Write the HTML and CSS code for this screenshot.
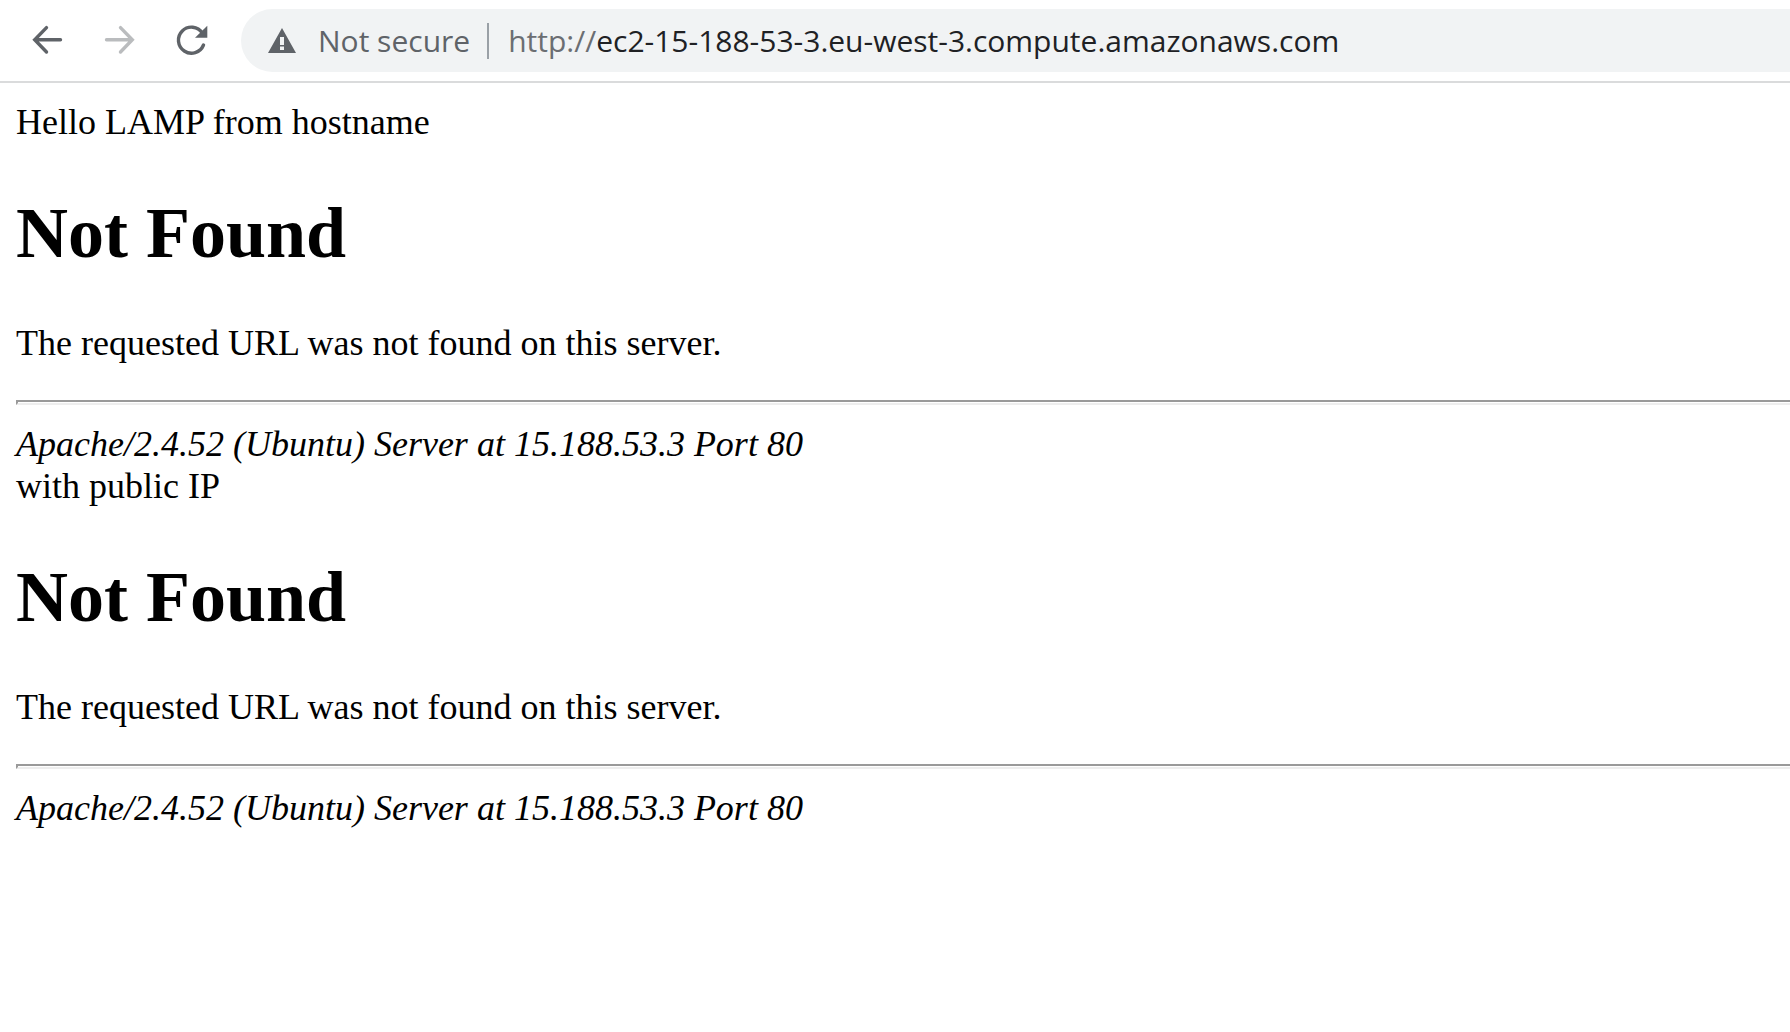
FILE: index.html
```html
<!DOCTYPE html>
<html lang="en">
<head>
<meta charset="utf-8">
<title>Not Found</title>
<link rel="stylesheet" href="styles.css">
</head>
<body>
<header class="toolbar">
  <nav class="nav">
    <button class="nav-button" type="button" aria-label="Back"><svg class="icon" viewBox="0 0 31 31"><path d="M28.500 14.800H3M14.500 2.600L2.700 14.800l11.800 12.200"/></svg></button>
    <button class="nav-button nav-button-disabled" type="button" aria-label="Forward" disabled><svg class="icon" viewBox="0 0 31 31"><path d="M2.500 14.800H28M16.500 2.600l11.800 12.200-11.800 12.200"/></svg></button>
    <button class="nav-button" type="button" aria-label="Reload"><svg class="icon" viewBox="0 0 31 31"><path d="M27.500 20A13 13 0 1 1 26.300 8"/><path class="icon-solid" d="M31.300 .8v11.900H19z"/></svg></button>
  </nav>
  <div class="address">
    <button class="security" type="button"><svg class="warning" viewBox="0 0 28 25"><path fill-rule="evenodd" d="M14 0L28 25H0zM12 9v8h4V9zM12 18.500V22h4v-3.500z"/></svg>Not secure</button>
    <span class="divider"></span>
    <a class="url" href="#"><span class="scheme">http://</span>ec2-15-188-53-3.eu-west-3.compute.amazonaws.com</a>
  </div>
</header>
<main class="page">
  <div>Hello LAMP from hostname</div>
  <h1 class="title">Not Found</h1>
  <p class="message">The requested URL was not found on this server.</p>
  <hr class="rule">
  <address>Apache/2.4.52 (Ubuntu) Server at 15.188.53.3 Port 80</address>
  <div>with public IP</div>
  <h1 class="title">Not Found</h1>
  <p class="message">The requested URL was not found on this server.</p>
  <hr class="rule">
  <address>Apache/2.4.52 (Ubuntu) Server at 15.188.53.3 Port 80</address>
</main>
</body>
</html>
```
FILE: styles.css
```css
body { margin: 0; background: #fff; color: #000; }
.toolbar { display: flex; align-items: center; padding: 9px 0 9px 24px; border-bottom: 2px solid #dadbdc; }
.nav { display: flex; gap: 25px; margin-right: 26px; }
.nav-button { display: flex; align-items: center; justify-content: center; width: 47px; height: 47px; padding: 0; border: 0; background: none; color: #5f6368; }
.nav-button-disabled { color: #babcbe; }
.icon { width: 31px; height: 31px; overflow: visible; fill: none; stroke: currentColor; stroke-width: 3.4; stroke-linecap: round; }
.icon-solid { fill: currentColor; stroke: none; }
.address { flex: 1; display: flex; align-items: center; height: 63px; padding-left: 27px; border-radius: 32px 0 0 32px; background: #f1f3f4; font: 30px "Open Sans", sans-serif; white-space: nowrap; }
.security { display: flex; align-items: center; gap: 22px; padding: 0; border: 0; background: none; color: #5f6368; font: inherit; }
.warning { width: 28px; height: 25px; fill: currentColor; }
.divider { width: 2px; height: 36px; margin: 0 19px 0 17px; background: #9aa0a6; }
.url { color: #202124; text-decoration: none; }
.scheme { color: #6b6e72; }
.page { padding: 18px 0 18px 16px; font: 36px/42px "Liberation Serif", serif; }
.title { margin: 49px 0 48px; font-size: 72px; line-height: 82px; }
.message { margin: 0; }
.rule { height: 1px; margin: 36px 0 18px; border: 2px solid; border-color: #9a9a9a #eee #eee #9a9a9a; border-right: 0; }
```
